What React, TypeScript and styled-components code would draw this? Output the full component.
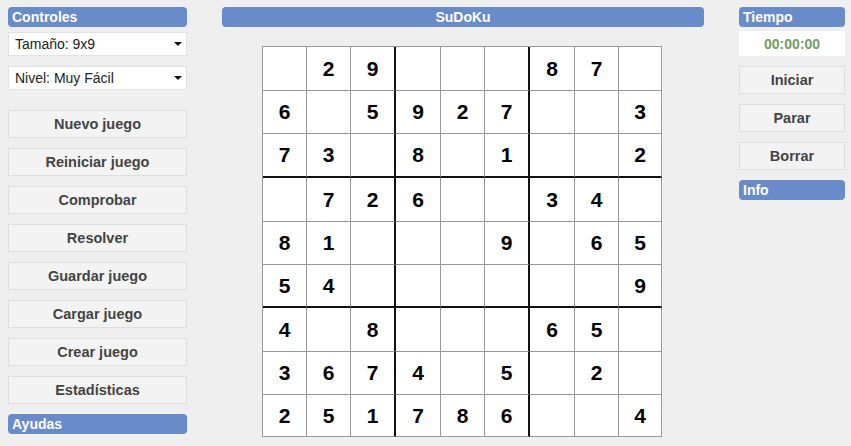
import React from "react";
import styled, { createGlobalStyle } from "styled-components";

const Global = createGlobalStyle`
  html, body { margin: 0; padding: 0; background: #efefef; }
  body { font-family: "Liberation Sans", Arial, sans-serif; }
`;

const Page = styled.div`
  display: grid;
  grid-template-columns: 179px 482px 106px;
  column-gap: 35px;
  padding: 7px 6px 0 8px;
  width: 851px;
  height: 446px;
  box-sizing: border-box;
  align-items: start;
`;

const Column = styled.div`
  display: flex;
  flex-direction: column;
`;

const Header = styled.div<{ $center?: boolean }>`
  height: 20px;
  line-height: 20px;
  background: #6a8bc9;
  color: #fff;
  font-weight: bold;
  font-size: 14px;
  border-radius: 4px;
  padding: 0 4px;
  text-align: ${(p) => (p.$center ? "center" : "left")};
`;

const SelectBox = styled.div<{ $mt: number }>`
  margin-top: ${(p) => p.$mt}px;
  height: 24px;
  background: #fff;
  border: 1px solid #e2e2e2;
  box-sizing: border-box;
  display: flex;
  align-items: center;
  justify-content: space-between;
  padding: 0 4px 0 6px;
  font-size: 14px;
  color: #222;
`;

const Arrow = styled.span`
  width: 0;
  height: 0;
  border-left: 4px solid transparent;
  border-right: 4px solid transparent;
  border-top: 4px solid #111;
`;

const Button = styled.div<{ $mt: number }>`
  margin-top: ${(p) => p.$mt}px;
  height: 28px;
  box-sizing: border-box;
  background: #f3f3f3;
  border: 1px solid #dedede;
  display: flex;
  align-items: center;
  justify-content: center;
  font-size: 14.5px;
  font-weight: bold;
  color: #444;
`;

const Spacer = styled.div<{ $h: number }>`
  height: ${(p) => p.$h}px;
`;

const Timer = styled.div`
  margin-top: 4px;
  height: 25px;
  background: #fff;
  display: flex;
  align-items: center;
  justify-content: center;
  color: #6f9f62;
  font-weight: bold;
  font-size: 14px;
`;

const BoardWrap = styled.div`
  display: flex;
  justify-content: center;
  margin-top: 19px;
  padding-right: 2px;
`;

const colW = [44, 44, 45, 45, 44, 45, 45, 44, 43];
const rowH = [44, 43, 44, 44, 43, 43, 44, 43, 42];

const Board = styled.div`
  display: grid;
  grid-template-columns: ${colW.map((w) => w + "px").join(" ")};
  grid-template-rows: ${rowH.map((h) => h + "px").join(" ")};
  border-top: 1px solid #999;
  border-left: 1px solid #999;
  background: #fff;
`;

const Cell = styled.div<{ $thickR: boolean; $thickB: boolean }>`
  box-sizing: border-box;
  border-right: ${(p) => (p.$thickR ? "2px solid #111" : "1px solid #999")};
  border-bottom: ${(p) => (p.$thickB ? "2px solid #111" : "1px solid #999")};
  display: flex;
  align-items: center;
  justify-content: center;
  font-size: 21px;
  font-weight: bold;
  color: #000;
`;

const grid = [
  "029000870",
  "605927003",
  "730801002",
  "072600340",
  "810009065",
  "540000009",
  "408000650",
  "367405020",
  "251786004",
];

const leftButtons = [
  "Nuevo juego",
  "Reiniciar juego",
  "Comprobar",
  "Resolver",
  "Guardar juego",
  "Cargar juego",
  "Crear juego",
  "Estadísticas",
];

export default function App() {
  return (
    <>
      <Global />
      <Page>
        <Column>
          <Header>Controles</Header>
          <SelectBox $mt={5}>
            <span>Tamaño: 9x9</span>
            <Arrow />
          </SelectBox>
          <SelectBox $mt={10}>
            <span>Nivel: Muy Fácil</span>
            <Arrow />
          </SelectBox>
          {leftButtons.map((b, i) => (
            <Button key={b} $mt={i === 0 ? 20 : 10}>
              {b}
            </Button>
          ))}
          <Spacer $h={10} />
          <Header>Ayudas</Header>
        </Column>
        <Column>
          <Header $center>SuDoKu</Header>
          <BoardWrap>
            <Board>
              {grid.map((row, r) =>
                row.split("").map((v, c) => (
                  <Cell
                    key={`${r}-${c}`}
                    $thickR={c === 2 || c === 5}
                    $thickB={r === 2 || r === 5}
                  >
                    {v === "0" ? "" : v}
                  </Cell>
                ))
              )}
            </Board>
          </BoardWrap>
        </Column>
        <Column>
          <Header>Tiempo</Header>
          <Timer>00:00:00</Timer>
          <Button $mt={10}>Iniciar</Button>
          <Button $mt={10}>Parar</Button>
          <Button $mt={10}>Borrar</Button>
          <Spacer $h={10} />
          <Header>Info</Header>
        </Column>
      </Page>
    </>
  );
}
